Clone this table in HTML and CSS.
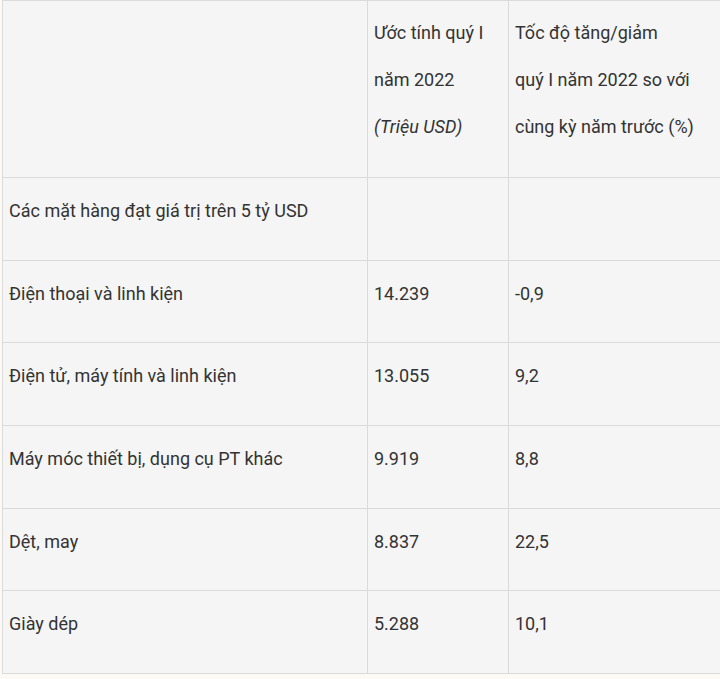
FILE: index.html
```html
<!DOCTYPE html>
<html lang="vi">
<head>
<meta charset="utf-8">
<title>Mặt hàng xuất khẩu</title>
<link rel="stylesheet" href="styles.css">
</head>
<body>
<table class="data">
  <colgroup>
    <col class="c1">
    <col class="c2">
    <col class="c3">
  </colgroup>
  <thead>
    <tr class="head">
      <th></th>
      <th>Ước tính quý I<br>năm 2022<br><em>(Triệu USD)</em></th>
      <th>Tốc độ tăng/giảm<br>quý I năm 2022 so với<br>cùng kỳ năm trước (%)</th>
    </tr>
  </thead>
  <tbody>
    <tr><td>Các mặt hàng đạt giá trị trên 5 tỷ USD</td><td></td><td></td></tr>
    <tr><td>Điện thoại và linh kiện</td><td>14.239</td><td>-0,9</td></tr>
    <tr><td>Điện tử, máy tính và linh kiện</td><td>13.055</td><td>9,2</td></tr>
    <tr><td>Máy móc thiết bị, dụng cụ PT khác</td><td>9.919</td><td>8,8</td></tr>
    <tr><td>Dệt, may</td><td>8.837</td><td>22,5</td></tr>
    <tr><td>Giày dép</td><td>5.288</td><td>10,1</td></tr>
  </tbody>
</table>
</body>
</html>
```
FILE: styles.css
```css
html, body {
  margin: 0;
  padding: 0;
  background: #fdfaf5;
  overflow: hidden;
}
.data {
  margin-left: 2px;
  border-collapse: collapse;
  table-layout: fixed;
  width: 740px;
  background: #f5f5f5;
  font-family: Roboto, "Liberation Sans", Arial, sans-serif;
  font-size: 18px;
  color: #333333;
}
.c1 { width: 365px; }
.c2 { width: 141px; }
.c3 { width: 234px; }
.data th, .data td {
  border: 1px solid #dadada;
  vertical-align: top;
  text-align: left;
  font-weight: normal;
  padding: 9px 7px 0 6px;
  line-height: 47px;
}
.data th {
  padding-top: 8px;
}
.data em {
  font-style: italic;
}
.head { height: 177px; }
.data tbody tr { height: 82.7px; }
```
